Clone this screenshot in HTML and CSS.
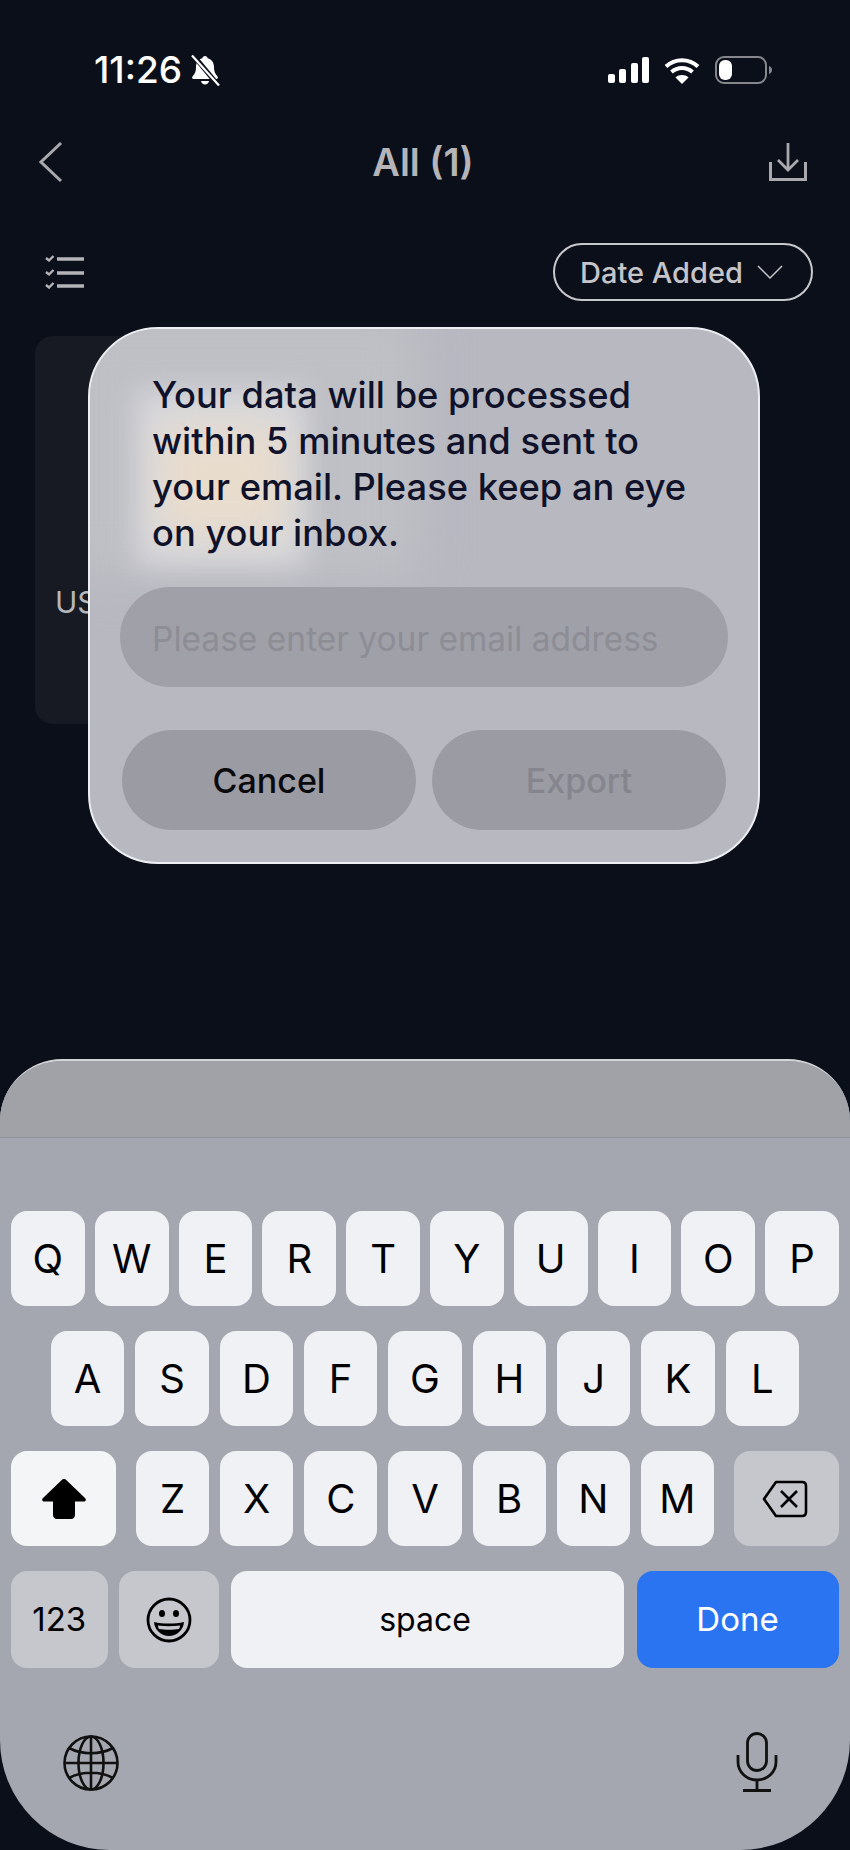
FILE: index.html
```html
<!DOCTYPE html>
<html lang="en">
<head>
<meta charset="utf-8">
<title>All (1)</title>
<link rel="stylesheet" href="styles.css">
</head>
<body>
<div class="screen">
  <header class="status">
    <div class="status-left">
      <span class="time">11:26</span>
      <svg class="bell" viewBox="0 0 30 32" width="30" height="32">
        <path fill="#fff" d="M15 2c1.500 0 2.400 1 2.600 2.200C22 5.400 24 9 24 13c0 4 .8 6.500 3.500 9.500.8 1 .3 2.500-1.200 2.500H3.700c-1.500 0-2-1.500-1.200-2.500C5.200 19.500 6 17 6 13c0-4 2-7.600 6.400-8.800C12.600 3 13.500 2 15 2zM11 27h8c-.4 2-2 3.500-4 3.500S11.400 29 11 27z"/>
        <path stroke="#0b0f19" stroke-width="5" d="M3 1l25 30"/>
        <path stroke="#fff" stroke-width="2.200" d="M2 1.500l27 30"/>
      </svg>
    </div>
    <div class="status-right">
      <svg viewBox="0 0 41 26" width="41" height="26">
        <rect x="0" y="17" width="7" height="9" rx="2" fill="#fff"/>
        <rect x="11" y="12" width="7" height="14" rx="2" fill="#fff"/>
        <rect x="23" y="6" width="7" height="20" rx="2" fill="#fff"/>
        <rect x="34" y="0" width="7" height="26" rx="2" fill="#fff"/>
      </svg>
      <svg viewBox="0 0 36 28" width="36" height="28">
        <path fill="none" stroke="#fff" stroke-width="4" d="M2 10.500C11 2 25 2 34 10.500M7.500 16c6-5.500 15-5.500 21 0"/>
        <path fill="#fff" d="M18 28l-6.500-6.500c3.600-3.200 9.400-3.200 13 0z"/>
      </svg>
      <svg viewBox="0 0 57 28" width="57" height="28">
        <rect x="1" y="1" width="50" height="26" rx="8" fill="none" stroke="#85878d" stroke-width="2"/>
        <rect x="4" y="4" width="13" height="20" rx="6" fill="#fff"/>
        <path fill="#85878d" d="M54 10c1.800.5 3 2 3 4s-1.200 3.500-3 4z"/>
      </svg>
    </div>
  </header>

  <nav class="nav">
    <svg viewBox="0 0 24 42" width="24" height="42">
      <path fill="none" stroke="#a9a9ad" stroke-width="3" d="M22 2L2 21l20 19"/>
    </svg>
    <h1 class="title">All (1)</h1>
    <svg class="nav-end" viewBox="0 0 38 38" width="38" height="38">
      <path fill="none" stroke="#a9a9ad" stroke-width="2.800" d="M19 0v27M9 17l10 10 10-10"/>
      <path fill="none" stroke="#a9a9ad" stroke-width="3" d="M1.500 19v17.500h35V19"/>
    </svg>
  </nav>

  <div class="toolbar">
    <svg viewBox="0 0 39 34" width="39" height="34">
      <g fill="none" stroke="#b5b5b9">
        <path stroke-width="2.400" d="M1 3l3 2.500L8.500 1M1 17l3 2.500L8.500 15M1 30l3 2.500L8.500 28"/>
        <path stroke-width="3.400" d="M12 4h27M12 18h27M12 31h27"/>
      </g>
    </svg>
    <div class="sort">
      <span>Date Added</span>
      <svg viewBox="0 0 26 14" width="26" height="14">
        <path fill="none" stroke="#c5c5c9" stroke-width="1.500" d="M1 1l12 12L25 1"/>
      </svg>
    </div>
  </div>

  <section class="card"><span class="card-label">US</span></section>

  <section class="keyboard">
    <div class="accessory"></div>
    <div class="rows">
      <div class="row">
        <div class="key">Q</div><div class="key">W</div><div class="key">E</div><div class="key">R</div><div class="key">T</div><div class="key">Y</div><div class="key">U</div><div class="key">I</div><div class="key">O</div><div class="key">P</div>
      </div>
      <div class="row row-home">
        <div class="key">A</div><div class="key">S</div><div class="key">D</div><div class="key">F</div><div class="key">G</div><div class="key">H</div><div class="key">J</div><div class="key">K</div><div class="key">L</div>
      </div>
      <div class="row row-shift">
        <div class="key key-shift">
          <svg viewBox="0 0 44 40" width="44" height="40"><path fill="#000" d="M22 0c1 0 1.800.5 2.500 1.200L43 19c1.500 1.500.8 3.500-1.200 3.500H33v13.500c0 2.300-1.500 4-4 4H15c-2.500 0-4-1.700-4-4V22.500H2.200C.2 22.500-.5 20.500 1 19L19.500 1.200C20.200.5 21 0 22 0z"/></svg>
        </div>
        <div class="letters">
          <div class="key">Z</div><div class="key">X</div><div class="key">C</div><div class="key">V</div><div class="key">B</div><div class="key">N</div><div class="key">M</div>
        </div>
        <div class="key key-fn key-back">
          <svg viewBox="0 0 46 38" width="46" height="38"><g fill="none" stroke="#000" stroke-width="2.600"><path stroke-linejoin="round" d="M14 2h26c2.500 0 4 1.500 4 4v26c0 2.500-1.500 4-4 4H14L2 19z"/><path d="M19 11l16 16M35 11L19 27"/></g></svg>
        </div>
      </div>
      <div class="row row-bottom">
        <div class="key key-fn key-num">123</div>
        <div class="key key-fn key-emoji">
          <svg viewBox="0 0 46 46" width="46" height="46">
            <circle cx="23" cy="23" r="21" fill="none" stroke="#000" stroke-width="2.800"/>
            <ellipse cx="16" cy="16.500" rx="3" ry="3.600"/><ellipse cx="30" cy="16.500" rx="3" ry="3.600"/>
            <path d="M8 25c9 2 21 2 30 0-.5 8-7.500 14-15 14S8.500 33 8 25z"/>
            <path fill="#c6c7cd" d="M12 28.500c7 1 15 1 22 0 0 1.500-.5 2.500-1 3.500-6 1-14 1-20 0-.5-1-1-2-1-3.500z"/>
          </svg>
        </div>
        <div class="key key-space">space</div>
        <div class="key key-done">Done</div>
      </div>
    </div>
    <div class="kb-tools">
      <svg viewBox="0 0 58 58" width="58" height="58">
        <g fill="none" stroke="#111" stroke-width="2.600">
          <circle cx="29" cy="29" r="26.500"/>
          <ellipse cx="29" cy="29" rx="12.500" ry="26.500"/>
          <path d="M29 2.500v53M2.500 29h53M7 14c13 7 31 7 44 0M7 44c13-7 31-7 44 0"/>
        </g>
      </svg>
      <svg class="mic" viewBox="0 0 42 60" width="42" height="60">
        <g fill="none" stroke="#111" stroke-width="2.800">
          <rect x="11.500" y="1.500" width="19" height="37" rx="9.500"/>
          <path d="M2 23v7c0 10 8.500 18 19 18s19-8 19-18v-7M21 48v10M7 58.500h28"/>
        </g>
      </svg>
    </div>
  </section>

  <section class="modal">
    <div class="modal-blur"></div>
    <div class="modal-glow"></div>
    <div class="modal-glow-warm"></div>
    <p class="message">Your data will be processed within 5 minutes and sent to your email. Please keep an eye on your inbox.</p>
    <div class="field">Please enter your email address</div>
    <div class="actions">
      <div class="btn btn-cancel">Cancel</div>
      <div class="btn btn-export">Export</div>
    </div>
  </section>
</div>
</body>
</html>
```

FILE: styles.css
```css
* { box-sizing: border-box; margin: 0; padding: 0; }
html, body { background: #0b0f19; }
body { font-family: Inter, "Liberation Sans", sans-serif; }

.screen {
  position: relative;
  width: 850px;
  height: 1850px;
  display: flex;
  flex-direction: column;
  overflow: hidden;
  background: #0b0f19;
}

.status {
  height: 140px;
  flex: none;
  display: flex;
  justify-content: space-between;
  align-items: center;
  padding: 0 78px 0 94px;
}
.status-left { display: flex; align-items: center; gap: 8px; }
.status-right { display: flex; align-items: center; gap: 15px; }
.time { color: #fff; font-size: 37px; font-weight: 500; line-height: 40px; }

.nav {
  height: 44px;
  flex: none;
  display: grid;
  grid-template-columns: 1fr auto 1fr;
  align-items: center;
  padding: 0 43px 0 39px;
}
.nav-end { justify-self: end; }
.title { color: #b5b5b9; font-size: 38px; font-weight: 600; line-height: 44px; }

.toolbar {
  margin-top: 59px;
  flex: none;
  display: flex;
  justify-content: space-between;
  align-items: center;
  padding: 0 37px 0 45px;
}
.sort {
  width: 260px;
  height: 58px;
  border: 2px solid #c8c8cc;
  border-radius: 29px;
  display: flex;
  align-items: center;
  gap: 14px;
  padding-left: 25px;
  color: #c5c5c9;
  font-size: 29px;
  font-weight: 500;
}

.card {
  flex: none;
  width: 345px;
  height: 388px;
  margin: 35px 0 0 35px;
  padding: 246px 0 0 20px;
  background: #171a22;
  border-radius: 18px;
}
.card-label { color: #b5b6ba; font-size: 30px; line-height: 40px; }

.keyboard {
  margin-top: auto;
  height: 791px;
  flex: none;
  display: flex;
  flex-direction: column;
  background: #a4a7af;
  border-radius: 62px 62px 110px 110px;
  border-top: 2px solid #d4d5d9;
  overflow: hidden;
}
.accessory {
  height: 77px;
  flex: none;
  background: #a0a2a8;
  border-bottom: 1px solid #92949c;
}
.rows {
  margin-top: 73px;
  padding: 0 11px;
  display: flex;
  flex-direction: column;
  gap: 25px;
}
.row { display: flex; height: 95px; gap: 10px; }
.row-home { padding: 0 40px; gap: 11px; }
.row-shift { gap: 20px; }
.row-bottom { height: 97px; gap: 11px; }

.key {
  flex: 1 1 0;
  display: flex;
  align-items: center;
  justify-content: center;
  background: #f0f1f4;
  border-radius: 16px;
  color: #000;
  font-size: 40px;
  line-height: 1;
}
.letters { flex: 1; display: flex; gap: 11px; }
.key-shift { flex: none; width: 105px; background: #f4f5f7; }
.key-fn { background: #c6c7cd; }
.key-back { flex: none; width: 105px; padding-right: 3px; }
.key-num { flex: none; width: 96.500px; font-size: 33px; }
.key-emoji { flex: none; width: 100px; }
.key-space { flex: none; width: 393px; margin-left: 1px; padding-right: 4px; font-size: 32px; }
.key-done {
  flex: none;
  width: 202px;
  margin-left: 2px;
  background: #2a74f2;
  color: #fff;
  font-size: 33px;
}
.kb-tools {
  margin-top: 66px;
  display: flex;
  justify-content: space-between;
  align-items: flex-start;
  padding: 0 72px 0 62px;
}
.mic { margin-top: -2px; }

.modal {
  position: absolute;
  left: 88px;
  top: 327px;
  width: 672px;
  height: 537px;
  padding: 43px 30px 34px;
  display: flex;
  flex-direction: column;
  background: #b7b8c0;
  border: 2px solid #eceef2;
  border-radius: 70px;
  overflow: hidden;
}
.modal-blur {
  position: absolute;
  left: -30px;
  top: -20px;
  width: 360px;
  height: 270px;
  background: #bfc0c5;
  filter: blur(24px);
}
.modal-glow {
  position: absolute;
  left: 46px;
  top: 60px;
  width: 170px;
  height: 178px;
  background: #d6d7dc;
  filter: blur(14px);
}
.modal-glow-warm {
  position: absolute;
  left: 68px;
  top: 95px;
  width: 128px;
  height: 115px;
  background: #e8dccd;
  filter: blur(18px);
}
.message {
  position: relative;
  padding: 0 20px 0 32px;
  color: #10122a;
  font-size: 36.300px;
  font-weight: 500;
  line-height: 46px;
}
.field {
  position: relative;
  margin-top: 31px;
  height: 100px;
  flex: none;
  display: flex;
  align-items: center;
  padding: 4px 0 0 32px;
  border-radius: 50px;
  background: #a0a0a8;
  color: #8d8d95;
  font-size: 33.500px;
}
.actions { position: relative; margin-top: 43px; display: flex; justify-content: space-between; padding: 0 2px; }
.btn {
  width: 294px;
  height: 100px;
  display: flex;
  align-items: center;
  justify-content: center;
  border-radius: 50px;
  background: #9b9ba3;
  font-size: 34px;
  font-weight: 500;
}
.btn-cancel { color: #0a0a0c; }
.btn-export { color: #85858d; }
```
